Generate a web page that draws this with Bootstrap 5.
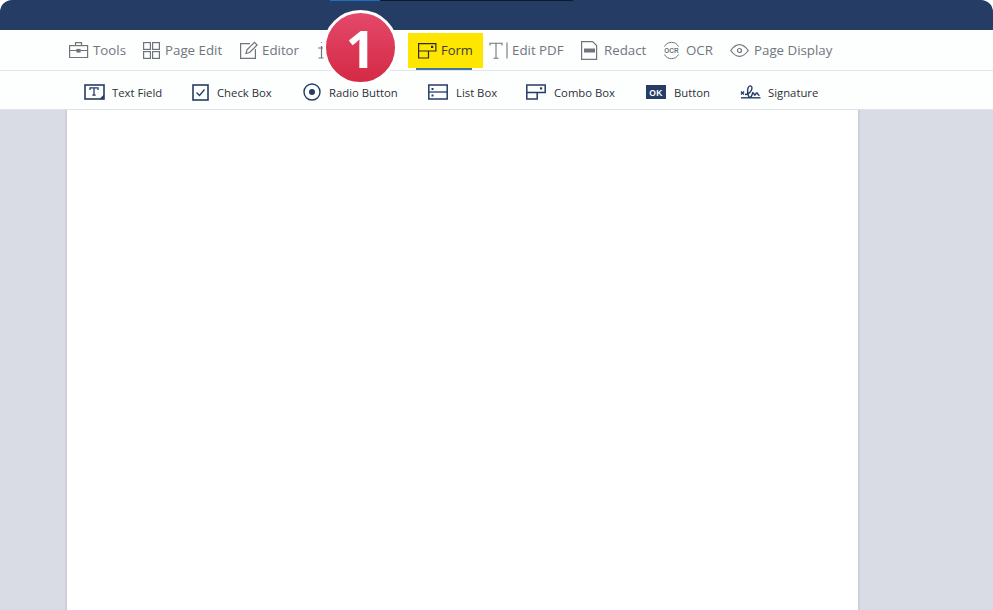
<!DOCTYPE html>
<html lang="en">
<head>
<meta charset="utf-8">
<title>Form</title>
<link rel="stylesheet" href="https://cdn.jsdelivr.net/npm/bootstrap@5.3.0/dist/css/bootstrap.min.css">
<style>
html,body{height:100%;overflow:hidden;background:#fff}
body{font-family:"Open Sans","Noto Sans",sans-serif}
.app-shell{height:610px;width:993px;position:relative;background:#fff}
.title-strip{height:30px;background:#253c64;border-radius:12px 12px 0 0;padding-left:330px}
.tab-blue{width:50px;height:1px;background:#1f6fc0}
.tab-dark{width:193px;height:1px;background:#0e1a30}
.main-tools{height:41px;background:#fdfefe;border-bottom:1px solid #e3e6ea;padding-left:69px;font-size:13.3px;color:#71767d}
.main-item{height:40px;white-space:nowrap;padding-top:2px}
.main-item svg{flex:none;margin-bottom:2px}
.w-tools{width:73px}.w-page{width:97px}.w-editor{width:78px}.w-hidden{width:91px}
.w-form{width:75px;height:35px;background:#fee600;color:#3a3d3c;padding-left:10px;padding-top:1px;position:relative;font-size:13px}
.form-line{position:absolute;left:8px;right:11px;bottom:-2px;height:2px;background:#3f77a0}
.w-gap{width:6px}
.w-edit{width:92px}.w-redact{width:81px}.w-ocr{width:68px}
.sub-tools{height:39px;background:#fdfefe;border-bottom:1px solid #dfe2e6;padding-left:84px;font-size:11.3px;color:#2b3138}
.sub-item{white-space:nowrap;height:38px;padding-top:6px}
.s-text{width:108px}.s-check{width:111px}.s-radio{width:125px}.s-list{width:98px}.s-combo{width:120px}.s-btn{width:94px}
.sub-item svg{flex:none;margin-bottom:2px}
.g3{margin-right:3px}.g4{margin-right:4px}.g5{margin-right:5px}.g6{margin-right:6px}.g7{margin-right:7px}.g8{margin-right:8px}
.work-area{height:500px;background:#d9dce5;padding-left:65px}
.doc-page{width:795px;height:100%;background:#fff;border-left:2px solid #cdd0da;border-right:2px solid #cdd0da}
.step-badge{position:absolute;left:323px;top:10px;width:75px;height:75px;border-radius:50%;border:3px solid #fff;background:linear-gradient(#e4486a,#d42a45);color:#fff;font:700 52px/69px "Open Sans",sans-serif;text-align:center}
</style>
</head>
<body>
<div class="app-shell">
  <div class="title-strip d-flex align-items-start"><div class="tab-blue"></div><div class="tab-dark"></div></div>

  <div class="main-tools d-flex align-items-center">
    <div class="main-item d-flex align-items-center w-tools">
      <svg class="g4" width="20" height="16" viewBox="0 0 20 16" fill="none" stroke="#70757c" stroke-width="1.2"><rect x=".6" y="3.6" width="18" height="12"/><path d="M6.500 3.500V.6h6v2.900M.6 8.500h18"/><rect x="8" y="7.500" width="3" height="2.500" fill="#70757c"/></svg>Tools
    </div>
    <div class="main-item d-flex align-items-center w-page">
      <svg class="g4" width="19" height="17" viewBox="0 0 19 17" fill="none" stroke="#70757c" stroke-width="1.2"><rect x="1.600" y=".6" width="6.800" height="6.800"/><rect x="10.600" y=".6" width="6.800" height="6.800"/><rect x="1.600" y="9.600" width="6.800" height="6.800"/><rect x="10.600" y="9.600" width="6.800" height="6.800"/></svg>Page Edit
    </div>
    <div class="main-item d-flex align-items-center w-editor">
      <svg class="g4" width="19" height="18" viewBox="0 0 19 18" fill="none" stroke="#70757c" stroke-width="1.2"><path d="M11 2.600H1.600v14.800h14.800V8"/><path d="M7 12.500l1-3.600L15.500 1.400l2.600 2.600-7.500 7.500z"/></svg>Editor
    </div>
    <div class="main-item d-flex align-items-center w-hidden">
      <svg width="10" height="18" viewBox="0 0 10 18" fill="none" stroke="#70757c" stroke-width="1.2"><path d="M4.500 1v.8M4.500 5v12M1 7h7M1.500 17h5"/></svg>
    </div>
    <div class="d-flex align-items-center w-form">
      <svg class="g4" width="19" height="17" viewBox="0 0 19 17" fill="none" stroke="#2a2a20" stroke-width="1.2"><path d="M.6 1.600h17.300v7.400H10.500v7H.6zM.6 9h9.900"/><rect x="13" y="3.800" width="2.200" height="2.200" fill="#2a2a20" stroke="none"/></svg>Form
      <span class="form-line"></span>
    </div>
    <div class="w-gap"></div>
    <div class="main-item d-flex align-items-center w-edit">
      <svg class="g3" width="20" height="17" viewBox="0 0 20 17" fill="none" stroke="#70757c" stroke-width="1.1"><path d="M1 3.500V1.200h12v2.300M7 1.200v15M4.500 16.200h5M18 .5v16"/></svg>Edit PDF
    </div>
    <div class="main-item d-flex align-items-center w-redact">
      <svg class="g6" width="17" height="19" viewBox="0 0 17 19" fill="none" stroke="#70757c" stroke-width="1.2"><path d="M.6.6h11l4 4v13.800H.6z"/><rect x="3" y="7.500" width="11" height="4" fill="#70757c" stroke="none"/></svg>Redact
    </div>
    <div class="main-item d-flex align-items-center w-ocr">
      <svg class="g5" width="19" height="19" viewBox="0 0 19 19" fill="none" stroke="#70757c" stroke-width="1"><path d="M2.500 5.500A8 8 0 0 1 16.500 5.500M2.500 13.500A8 8 0 0 0 16.500 13.500"/><text x="9.500" y="12" font-size="6.500" font-weight="700" text-anchor="middle" fill="#70757c" stroke="none" font-family="Liberation Sans">OCR</text></svg>OCR
    </div>
    <div class="main-item d-flex align-items-center">
      <svg class="g5" width="19" height="13" viewBox="0 0 19 13" fill="none" stroke="#70757c" stroke-width="1.2"><path d="M.7 6.500C4 2 6.500.7 9.500.7s5.500 1.300 8.800 5.800C15 11 12.500 12.300 9.500 12.300S4 11 .7 6.500z"/><circle cx="9.500" cy="6.500" r="2"/></svg>Page Display
    </div>
  </div>

  <div class="sub-tools d-flex align-items-center">
    <div class="sub-item d-flex align-items-center s-text">
      <svg class="g7" width="21" height="16" viewBox="0 0 21 16" fill="none"><rect x="1" y="1" width="19" height="14" stroke="#253c64" stroke-width="1.600"/><path d="M6 6V3.800h8V6M10 3.800v7.400M8.300 11.200h3.400" stroke="#253c64" stroke-width="1.300"/><path d="M20 10.500V15h-4.500z" fill="#253c64"/></svg>Text Field
    </div>
    <div class="sub-item d-flex align-items-center s-check">
      <svg class="g8" width="17" height="17" viewBox="0 0 17 17" fill="none"><rect x="1" y="1" width="15" height="15" stroke="#253c64" stroke-width="1.600"/><path d="M4.500 8.500l3 3 5-6" stroke="#253c64" stroke-width="1.300"/></svg>Check Box
    </div>
    <div class="sub-item d-flex align-items-center s-radio">
      <svg class="g8" width="18" height="18" viewBox="0 0 18 18" fill="none"><circle cx="9" cy="9" r="8" stroke="#253c64" stroke-width="1.400"/><circle cx="9" cy="9" r="3" fill="#253c64"/></svg>Radio Button
    </div>
    <div class="sub-item d-flex align-items-center s-list">
      <svg class="g8" width="20" height="16" viewBox="0 0 20 16" fill="none"><rect x=".8" y="1" width="18.400" height="14" stroke="#253c64" stroke-width="1.500"/><path d="M.8 8h18.400" stroke="#253c64" stroke-width="1.300"/><rect x="3.500" y="4" width="2" height="2" fill="#253c64"/><rect x="3.500" y="10.500" width="2" height="2" fill="#253c64"/></svg>List Box
    </div>
    <div class="sub-item d-flex align-items-center s-combo">
      <svg class="g8" width="20" height="16" viewBox="0 0 20 16" fill="none"><path d="M.8 1h18.400v7.500h-8v6.500H.8zM.8 8.500h10.400" stroke="#253c64" stroke-width="1.500"/><rect x="14" y="3.300" width="2.200" height="2.200" fill="#253c64"/></svg>Combo Box
    </div>
    <div class="sub-item d-flex align-items-center s-btn">
      <svg class="g8" width="20" height="14" viewBox="0 0 20 14"><rect width="20" height="14" fill="#253c64"/><text x="10" y="10.500" font-size="8.500" font-weight="700" text-anchor="middle" fill="#fff" font-family="Liberation Sans" letter-spacing=".5">OK</text></svg>Button
    </div>
    <div class="sub-item d-flex align-items-center">
      <svg class="g7" width="21" height="15" viewBox="0 0 21 15" fill="none" stroke="#253c64" stroke-width="1.400"><path d="M1 12.800h19.500" stroke-width="1.400"/><path d="M1 6.500l3 3M4 6.500l-3 3M5 9.500C9 9.500 12 5.500 12 3S9.500 .2 8.500 2 7.500 8 8.500 11s3 .5 3.500-1 .5-3 1.500-2 .5 2.500 1.500 2 1-2.500 2-2 1 2.500 2.500 2.500"/></svg>Signature
    </div>
  </div>

  <div class="work-area"><div class="doc-page"></div></div>

  <div class="step-badge">1</div>
</div>
<script src="https://cdn.jsdelivr.net/npm/bootstrap@5.3.0/dist/js/bootstrap.bundle.min.js"></script>
</body>
</html>
